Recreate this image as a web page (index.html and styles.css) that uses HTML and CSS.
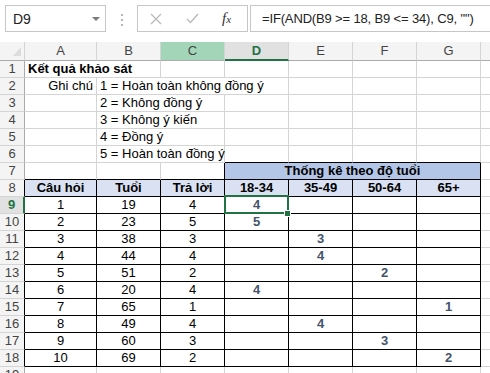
FILE: index.html
```html
<!DOCTYPE html>
<html lang="vi">
<head>
  <meta charset="UTF-8" />
  <title>Kết quả khảo sát</title>
  <link rel="stylesheet" href="styles.css">
</head>
<body>
  <div class="bar">
    <div class="namebox"><span>D9</span><span class="arrow"></span></div>
    <svg class="grip" width="2" height="12" viewBox="0 0 2 12">
      <rect x="0" y="0" width="2" height="2" fill="#b5b5b5"/>
      <rect x="0" y="5" width="2" height="2" fill="#b5b5b5"/>
      <rect x="0" y="10" width="2" height="2" fill="#b5b5b5"/>
    </svg>
    <div class="fxbox">
      <svg class="cancel" width="12" height="12" viewBox="0 0 12 12">
        <path d="M1 1 L11 11 M11 1 L1 11" stroke="#b9b9b9" stroke-width="1.3" fill="none"/>
      </svg>
      <svg class="enter" width="13" height="11" viewBox="0 0 13 11">
        <path d="M1 6 L4.5 9.5 L12 1" stroke="#b9b9b9" stroke-width="1.3" fill="none"/>
      </svg>
      <i class="fx">f<small>x</small></i>
    </div>
    <div class="formula">=IF(AND(B9 &gt;= 18, B9 &lt;= 34), C9, "")</div>
  </div>

  <div class="sheet">
    <!-- column headers -->
    <div class="row">
      <div class="hdr corner"></div>
      <div class="hdr">A</div>
      <div class="hdr">B</div>
      <div class="hdr hover">C</div>
      <div class="hdr active">D</div>
      <div class="hdr">E</div>
      <div class="hdr">F</div>
      <div class="hdr">G</div>
      <div class="hdr"></div>
    </div>

    <div class="row">
      <div class="num">1</div>
      <div class="cell span2 bold">Kết quả khảo sát</div>
      <div class="cell"></div><div class="cell"></div><div class="cell"></div>
      <div class="cell"></div><div class="cell"></div><div class="cell"></div>
    </div>
    <div class="row">
      <div class="num">2</div>
      <div class="cell right">Ghi chú</div>
      <div class="cell span3">1 = Hoàn toàn không đồng ý</div>
      <div class="cell"></div><div class="cell"></div><div class="cell"></div><div class="cell"></div>
    </div>
    <div class="row">
      <div class="num">3</div>
      <div class="cell"></div>
      <div class="cell span2">2 = Không đồng ý</div>
      <div class="cell"></div><div class="cell"></div><div class="cell"></div>
      <div class="cell"></div><div class="cell"></div>
    </div>
    <div class="row">
      <div class="num">4</div>
      <div class="cell"></div>
      <div class="cell span2">3 = Không ý kiến</div>
      <div class="cell"></div><div class="cell"></div><div class="cell"></div>
      <div class="cell"></div><div class="cell"></div>
    </div>
    <div class="row">
      <div class="num">5</div>
      <div class="cell"></div>
      <div class="cell span2">4 = Đồng ý</div>
      <div class="cell"></div><div class="cell"></div><div class="cell"></div>
      <div class="cell"></div><div class="cell"></div>
    </div>
    <div class="row">
      <div class="num">6</div>
      <div class="cell"></div>
      <div class="cell span2">5 = Hoàn toàn đồng ý</div>
      <div class="cell edge-b"></div><div class="cell edge-b"></div><div class="cell edge-b"></div>
      <div class="cell edge-b"></div><div class="cell"></div>
    </div>
    <div class="row">
      <div class="num">7</div>
      <div class="cell edge-b"></div>
      <div class="cell edge-b"></div>
      <div class="cell edge-b edge-r"></div>
      <div class="cell tb group span4">Thống kê theo độ tuổi</div>
      <div class="cell"></div>
    </div>
    <div class="row">
      <div class="num edge-r">8</div>
      <div class="cell tb head">Câu hỏi</div>
      <div class="cell tb head">Tuổi</div>
      <div class="cell tb head">Trả lời</div>
      <div class="cell tb head">18-34</div>
      <div class="cell tb head">35-49</div>
      <div class="cell tb head">50-64</div>
      <div class="cell tb head">65+</div>
      <div class="cell"></div>
    </div>

    <!-- data rows -->
    <div class="row">
      <div class="num current">9</div>
      <div class="cell tb">1</div><div class="cell tb">19</div><div class="cell tb">4</div>
      <div class="cell tb val sel">4<span class="handle"></span></div>
      <div class="cell tb val"></div><div class="cell tb val"></div><div class="cell tb val"></div>
      <div class="cell"></div>
    </div>
    <div class="row">
      <div class="num edge-r">10</div>
      <div class="cell tb">2</div><div class="cell tb">23</div><div class="cell tb">5</div>
      <div class="cell tb val">5</div><div class="cell tb val"></div><div class="cell tb val"></div><div class="cell tb val"></div>
      <div class="cell"></div>
    </div>
    <div class="row">
      <div class="num edge-r">11</div>
      <div class="cell tb">3</div><div class="cell tb">38</div><div class="cell tb">3</div>
      <div class="cell tb val"></div><div class="cell tb val">3</div><div class="cell tb val"></div><div class="cell tb val"></div>
      <div class="cell"></div>
    </div>
    <div class="row">
      <div class="num edge-r">12</div>
      <div class="cell tb">4</div><div class="cell tb">44</div><div class="cell tb">4</div>
      <div class="cell tb val"></div><div class="cell tb val">4</div><div class="cell tb val"></div><div class="cell tb val"></div>
      <div class="cell"></div>
    </div>
    <div class="row">
      <div class="num edge-r">13</div>
      <div class="cell tb">5</div><div class="cell tb">51</div><div class="cell tb">2</div>
      <div class="cell tb val"></div><div class="cell tb val"></div><div class="cell tb val">2</div><div class="cell tb val"></div>
      <div class="cell"></div>
    </div>
    <div class="row">
      <div class="num edge-r">14</div>
      <div class="cell tb">6</div><div class="cell tb">20</div><div class="cell tb">4</div>
      <div class="cell tb val">4</div><div class="cell tb val"></div><div class="cell tb val"></div><div class="cell tb val"></div>
      <div class="cell"></div>
    </div>
    <div class="row">
      <div class="num edge-r">15</div>
      <div class="cell tb">7</div><div class="cell tb">65</div><div class="cell tb">1</div>
      <div class="cell tb val"></div><div class="cell tb val"></div><div class="cell tb val"></div><div class="cell tb val">1</div>
      <div class="cell"></div>
    </div>
    <div class="row">
      <div class="num edge-r">16</div>
      <div class="cell tb">8</div><div class="cell tb">49</div><div class="cell tb">4</div>
      <div class="cell tb val"></div><div class="cell tb val">4</div><div class="cell tb val"></div><div class="cell tb val"></div>
      <div class="cell"></div>
    </div>
    <div class="row">
      <div class="num edge-r">17</div>
      <div class="cell tb">9</div><div class="cell tb">60</div><div class="cell tb">3</div>
      <div class="cell tb val"></div><div class="cell tb val"></div><div class="cell tb val">3</div><div class="cell tb val"></div>
      <div class="cell"></div>
    </div>
    <div class="row">
      <div class="num edge-r">18</div>
      <div class="cell tb">10</div><div class="cell tb">69</div><div class="cell tb">2</div>
      <div class="cell tb val"></div><div class="cell tb val"></div><div class="cell tb val"></div><div class="cell tb val">2</div>
      <div class="cell"></div>
    </div>
    <div class="row">
      <div class="num">19</div>
      <div class="cell"></div><div class="cell"></div><div class="cell"></div><div class="cell"></div>
      <div class="cell"></div><div class="cell"></div><div class="cell"></div><div class="cell"></div>
    </div>
  </div>
</body>
</html>
```

FILE: styles.css
```css
body {
  margin: 0;
  width: 490px;
  height: 373px;
  overflow: hidden;
  background: #fff;
  font-family: "Liberation Sans", Arial, sans-serif;
  font-size: 13px;
  color: #000;
}

/* formula bar */
.bar {
  display: flex;
  align-items: flex-start;
  height: 42px;
  padding-top: 5px;
  box-sizing: border-box;
}

.namebox {
  margin-left: 5px;
  width: 101px;
  height: 27px;
  box-sizing: border-box;
  border: 1px solid #c6c6c6;
  display: flex;
  align-items: center;
  justify-content: space-between;
  padding: 0 5px 0 7px;
  font-size: 14px;
  color: #222;
}

.arrow {
  border-left: 4px solid transparent;
  border-right: 4px solid transparent;
  border-top: 4px solid #7a7a7a;
}

.grip {
  margin: 9px 0 0 15px;
}

.fxbox {
  margin-left: 14px;
  width: 111px;
  height: 27px;
  box-sizing: border-box;
  border: 1px solid #c6c6c6;
  display: flex;
  align-items: center;
}

.cancel {
  margin-left: 12px;
}

.enter {
  margin-left: 24px;
}

.fx {
  margin-left: 23px;
  font-family: "Liberation Serif", serif;
  font-size: 15px;
  color: #333;
}

.fx small {
  font-size: 11px;
}

.formula {
  flex: 1;
  margin-left: 2px;
  height: 27px;
  box-sizing: border-box;
  border: 1px solid #c6c6c6;
  border-right: none;
  padding-left: 11px;
  line-height: 25px;
  letter-spacing: -0.15px;
  white-space: nowrap;
  color: #222;
}

/* grid */
.sheet {
  display: grid;
  grid-template-columns: 25px 72px repeat(7, 64px);
  grid-template-rows: 19px;
  grid-auto-rows: 17px;
}

.row {
  display: contents;
}

.hdr,
.num,
.cell {
  box-sizing: border-box;
  white-space: nowrap;
}

.hdr {
  background: #f4f4f4;
  border-right: 1px solid #d4d4d4;
  border-bottom: 1px solid #ababab;
  text-align: center;
  line-height: 18px;
  color: #444;
}

.hdr.corner {
  position: relative;
}

.hdr.corner::after {
  content: "";
  position: absolute;
  right: 3px;
  bottom: 4px;
  border-left: 8px solid transparent;
  border-bottom: 9px solid #dcdcdc;
}

.hdr.hover {
  background: #a3d6b9;
}

.hdr.active {
  background: #e1e1e1;
  border-bottom: 2px solid #217346;
  color: #217346;
  font-weight: bold;
  line-height: 17px;
}

.num {
  background: #f4f4f4;
  border-right: 1px solid #ababab;
  border-bottom: 1px solid #d4d4d4;
  text-align: center;
  line-height: 16px;
  color: #444;
}

.num.current {
  background: #e1e1e1;
  border-right: 2px solid #217346;
  color: #217346;
  font-weight: bold;
}

.cell {
  border-right: 1px solid #d4d4d4;
  border-bottom: 1px solid #d4d4d4;
  padding: 0 3px;
  line-height: 16px;
}

.span2 { grid-column: span 2; }
.span3 { grid-column: span 3; }
.span4 { grid-column: span 4; }

.bold { font-weight: bold; }
.right { text-align: right; }

.edge-b { border-bottom-color: #000; }
.edge-r { border-right-color: #000; }

/* survey table */
.tb {
  border-right-color: #000;
  border-bottom-color: #000;
  text-align: center;
}

.head {
  background: #d9e1f2;
  font-weight: bold;
}

.group {
  background: #b4c6e7;
  font-weight: bold;
}

.val {
  font-weight: bold;
  color: #44546a;
}

.sel {
  position: relative;
}

.sel::after {
  content: "";
  position: absolute;
  left: -1px;
  right: -1px;
  top: -2px;
  bottom: -1px;
  border: 2px solid #217346;
}

.handle {
  position: absolute;
  right: -3px;
  bottom: -4px;
  width: 5px;
  height: 5px;
  background: #217346;
  border: 1px solid #fff;
  z-index: 1;
}
```
